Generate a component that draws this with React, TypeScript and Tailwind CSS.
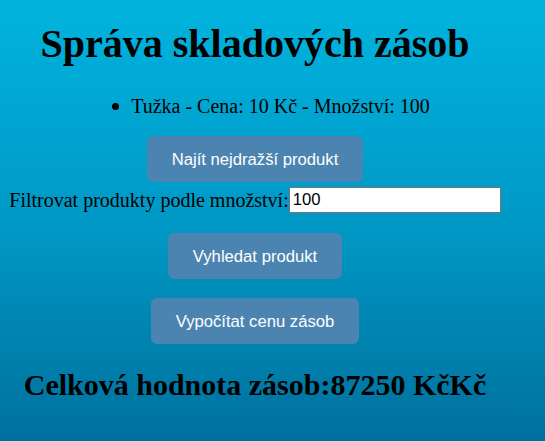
export default function App() {
    return (
        <div className="w-full h-screen overflow-hidden bg-[linear-gradient(to_bottom,#00b4de_0%,#0099c6_50%,#007aa7_88%,#0070a0_100%)] font-['Liberation_Serif',serif] text-black">
            <div className="w-[510px] flex flex-col items-center">
                <h1 className="mt-[21px] text-[40px] leading-[46px] font-bold">Správa skladových zásob</h1>

                <ul className="mt-[28px] pl-8 flex justify-center">
                    <li className="flex items-center text-[20px] leading-[23px]">
                        <span className="w-[7px] h-[7px] rounded-full bg-black mr-[12px]"></span>
                        Tužka - Cena: 10 Kč - Množství: 100
                    </li>
                </ul>

                <button className="mt-[18px] h-[46px] px-[25px] rounded-md bg-[#4c84b1] text-white font-['Liberation_Sans',sans-serif] text-[16.67px]">
                    Najít nejdražší produkt
                </button>

                <div className="mt-[5px] flex items-center text-[20px] leading-[23px]">
                    <label>Filtrovat produkty podle množství:</label>
                    <input
                        type="text"
                        defaultValue="100"
                        className="w-[212px] h-[26px] border border-[#767676] bg-white px-[3px] font-['Liberation_Sans',sans-serif] text-[16.67px] outline-none"
                    />
                </div>

                <button className="mt-[20px] h-[46px] px-[25px] rounded-md bg-[#4c84b1] text-white font-['Liberation_Sans',sans-serif] text-[16.67px]">
                    Vyhledat produkt
                </button>

                <button className="mt-[19px] h-[46px] px-[25px] rounded-md bg-[#4c84b1] text-white font-['Liberation_Sans',sans-serif] text-[16.67px]">
                    Vypočítat cenu zásob
                </button>

                <h2 className="mt-[24px] text-[30px] leading-[34px] font-bold">Celková hodnota zásob:87250 KčKč</h2>
            </div>
        </div>
    );
}
